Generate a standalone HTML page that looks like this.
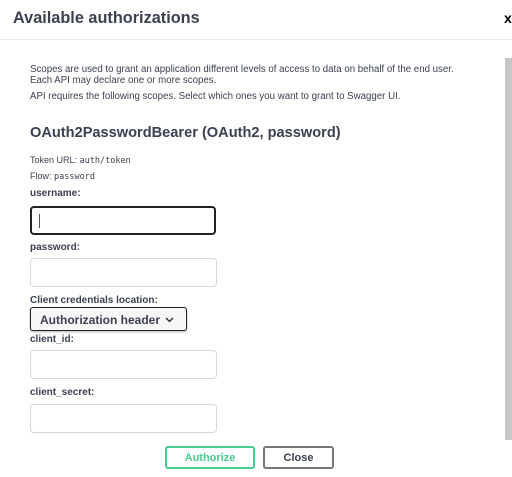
<!DOCTYPE html>
<html><head><style>
*{margin:0;padding:0;box-sizing:border-box}
body{width:512px;height:477px;background:#fff;font-family:"Liberation Sans",sans-serif;color:#3b4151;position:relative;overflow:hidden}
.a{position:absolute;white-space:nowrap}
.inp{position:absolute;left:30px;width:187px;height:29px;border:1px solid #d9d9d9;border-radius:4px;background:#fff}
.lbl{position:absolute;left:30px;font-size:10px;font-weight:bold;color:#3b4151}
.p{font-size:9.7px;color:#3b4151;left:30px}
</style></head><body>
<div class="a" style="left:13px;top:9px;font-size:16.3px;font-weight:bold;color:#3b4151">Available authorizations</div>
<div class="a" style="left:504px;top:10px;font-size:14px;font-weight:bold;color:#000">x</div>
<div class="a" style="left:0;top:39px;width:512px;height:1px;background:#ebebeb"></div>
<div class="a" style="left:505px;top:58px;width:7px;height:382px;background:#c8c8c8"></div>
<div class="a p" style="top:64px">Scopes are used to grant an application different levels of access to data on behalf of the end user.</div>
<div class="a p" style="top:75px">Each API may declare one or more scopes.</div>
<div class="a p" style="top:91px">API requires the following scopes. Select which ones you want to grant to Swagger UI.</div>
<div class="a" style="left:30px;top:125px;font-size:14.6px;font-weight:bold;color:#3b4151">OAuth2PasswordBearer (OAuth2, password)</div>
<div class="a" style="left:30px;top:155px;font-size:9px;color:#3b4151">Token URL: <span style="font-family:'DejaVu Sans Mono',monospace;font-size:8.5px">auth/token</span></div>
<div class="a" style="left:30px;top:171px;font-size:9px;color:#3b4151">Flow: <span style="font-family:'DejaVu Sans Mono',monospace;font-size:8.5px">password</span></div>
<div class="lbl" style="top:188px">username:</div>
<div class="inp" style="top:206px;height:29px;border:2px solid #222;width:186px"><div style="position:absolute;left:7px;top:6px;width:1px;height:14px;background:#555"></div></div>
<div class="lbl" style="top:242px">password:</div>
<div class="inp" style="top:258px"></div>
<div class="lbl" style="top:295px">Client credentials location:</div>
<div class="a" style="left:30px;top:307px;width:157px;height:24px;border:1px solid #222;border-radius:3px;background:#f7f7f7;box-shadow:0 1px 2px rgba(0,0,0,.3);font-size:12px;font-weight:bold;padding:5px 0 0 9px;color:#3b4151">Authorization header
<svg style="position:absolute;left:134px;top:9px" width="9" height="6" viewBox="0 0 9 6"><path d="M1 1l3.5 3.5L8 1" fill="none" stroke="#222" stroke-width="1.3"/></svg></div>
<div class="lbl" style="top:334px">client_id:</div>
<div class="inp" style="top:350px"></div>
<div class="lbl" style="top:387px">client_secret:</div>
<div class="inp" style="top:404px"></div>
<div class="a" style="left:165px;top:446px;width:90px;height:23px;border:2px solid #49cc90;border-radius:3px;color:#49cc90;font-size:11px;font-weight:bold;text-align:center;line-height:20px">Authorize</div>
<div class="a" style="left:263px;top:446px;width:71px;height:23px;border:2px solid #777;border-radius:3px;color:#3b4151;font-size:11px;font-weight:bold;text-align:center;line-height:20px">Close</div>
</body></html>
